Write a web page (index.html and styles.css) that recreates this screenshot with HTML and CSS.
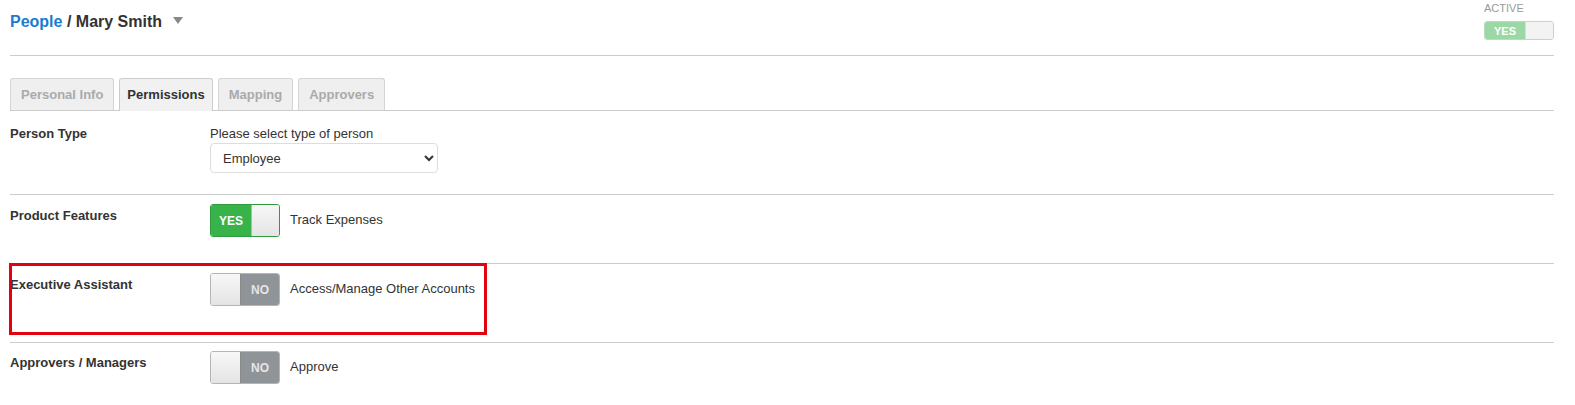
FILE: index.html
```html
<!DOCTYPE html>
<html lang="en">
<head>
    <meta charset="UTF-8">
    <meta name="viewport" content="width=device-width, initial-scale=1.0">
    <title>Mary Smith - People</title>
    <link rel="stylesheet" href="styles.css">
</head>
<body>
    <div class="page">
        <div class="page-header">
            <h1 class="title">
                <a href="#" class="crumb">People</a> / Mary Smith
                <span class="caret"></span>
            </h1>
            <div class="active-box">
                <div class="active-label">ACTIVE</div>
                <div class="switch switch-small switch-on switch-faded">
                    <span class="switch-yes">YES</span>
                    <span class="switch-handle"></span>
                </div>
            </div>
        </div>

        <ul class="tabs">
            <li class="tab">Personal Info</li>
            <li class="tab tab-active">Permissions</li>
            <li class="tab">Mapping</li>
            <li class="tab">Approvers</li>
        </ul>

        <div class="row row-type">
            <div class="row-label">Person Type</div>
            <div class="row-body">
                <div class="hint">Please select type of person</div>
                <select class="select">
                    <option>Employee</option>
                    <option>Contractor</option>
                </select>
            </div>
        </div>

        <div class="row row-features">
            <div class="row-label">Product Features</div>
            <div class="row-body inline">
                <div class="switch switch-on">
                    <span class="switch-yes">YES</span>
                    <span class="switch-handle"></span>
                </div>
                <span class="switch-text">Track Expenses</span>
            </div>
        </div>

        <div class="row row-assistant">
            <div class="highlight"></div>
            <div class="row-label">Executive Assistant</div>
            <div class="row-body inline">
                <div class="switch switch-off">
                    <span class="switch-handle"></span>
                    <span class="switch-no">NO</span>
                </div>
                <span class="switch-text">Access/Manage Other Accounts</span>
            </div>
        </div>

        <div class="row row-last">
            <div class="row-label">Approvers / Managers</div>
            <div class="row-body inline">
                <div class="switch switch-off">
                    <span class="switch-handle"></span>
                    <span class="switch-no">NO</span>
                </div>
                <span class="switch-text">Approve</span>
            </div>
        </div>
    </div>
</body>
</html>
```

FILE: styles.css
```css
body {
    margin: 0;
    font-family: "Liberation Sans", Arial, sans-serif;
    font-size: 13px;
    color: #333;
    background: #fff;
}

.page {
    margin: 0 21px 0 10px;
}

.page-header {
    display: flex;
    justify-content: space-between;
    height: 55px;
    border-bottom: 1px solid #ccc;
}

.title {
    margin: 0;
    padding-top: 12px;
    font-size: 16px;
    font-weight: bold;
    color: #333;
    line-height: 20px;
}

.crumb {
    color: #1a7bd0;
    text-decoration: none;
}

.caret {
    display: inline-block;
    margin-left: 6px;
    width: 0;
    height: 0;
    border-left: 5px solid transparent;
    border-right: 5px solid transparent;
    border-top: 7px solid #888;
    vertical-align: 3px;
}

.active-box {
    width: 70px;
    padding-top: 2px;
}

.active-label {
    font-size: 11px;
    color: #999;
    line-height: 13px;
    margin-bottom: 6px;
}

/* toggle switches */
.switch {
    display: flex;
    width: 70px;
    height: 33px;
    box-sizing: border-box;
    border: 1px solid #b5b5b5;
    border-radius: 3px;
    overflow: hidden;
    flex-shrink: 0;
}

.switch span {
    display: flex;
    align-items: center;
    justify-content: center;
    font-weight: bold;
    font-size: 12px;
}

.switch-yes {
    width: 40px;
    background: #38b34a;
    color: #fff;
}

.switch-no {
    width: 38px;
    background: #8f9499;
    color: #e6e6e6;
}

.switch-handle {
    flex: 1;
    background: linear-gradient(#f7f7f7, #e4e4e4);
}

.switch-on {
    border-color: #2f9a3e;
}

.switch-on .switch-handle {
    border-left: 1px solid #b5b5b5;
}

.switch-off .switch-handle {
    border-right: 1px solid #8a8a8a;
}

.switch-small {
    height: 19px;
}

.switch-faded {
    border-color: #b8dcbd;
}

.switch-faded .switch-yes {
    background: #9cd8a5;
    font-size: 11px;
}

.switch-faded .switch-handle {
    background: #f3f3f3;
    border-left-color: #ddd;
}

/* tabs */
.tabs {
    display: flex;
    gap: 5px;
    list-style: none;
    margin: 22px 0 0;
    padding: 0;
    border-bottom: 1px solid #ccc;
}

.tab {
    height: 31px;
    line-height: 31px;
    padding: 0 10px;
    background: #efefef;
    border: 1px solid #d4d4d4;
    border-bottom: none;
    border-radius: 3px 3px 0 0;
    color: #aaa;
    font-weight: bold;
    margin-bottom: -1px;
}

.tab-active {
    padding: 0 7px;
    color: #333;
    background: #f1f1f1;
    border-color: #ccc;
    height: 32px;
}

/* rows */
.row {
    position: relative;
    display: grid;
    grid-template-columns: 200px 1fr;
    border-bottom: 1px solid #ccc;
}

.row-label {
    font-weight: bold;
    color: #333;
}

.row-type {
    padding: 15px 0 21px;
}

.hint {
    line-height: 16px;
    margin-bottom: 1px;
}

.select {
    width: 228px;
    height: 30px;
    padding: 0 8px;
    font-family: "Liberation Sans", Arial, sans-serif;
    font-size: 13px;
    color: #333;
    background: #fff;
    border: 1px solid #ddd;
    border-radius: 4px;
}

.inline {
    display: flex;
    align-items: center;
}

.switch-text {
    margin-left: 10px;
    align-self: flex-start;
    padding-top: 8px;
}

.row-features {
    padding: 9px 0 26px;
    height: 33px;
}

.row-features .row-label,
.row-assistant .row-label,
.row-last .row-label {
    padding-top: 4px;
}

.row-assistant {
    padding: 9px 0 36px;
    height: 33px;
}

.row-last {
    padding: 8px 0 20px;
    border-bottom: none;
}

.highlight {
    position: absolute;
    left: -1px;
    top: -1px;
    width: 472px;
    height: 66px;
    border: 3px solid #e3000f;
}
```
